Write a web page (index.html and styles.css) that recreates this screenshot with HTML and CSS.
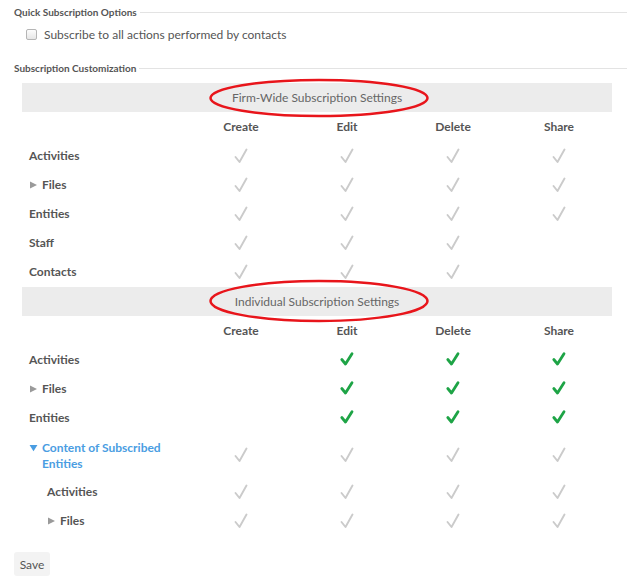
FILE: index.html
```html
<!DOCTYPE html>
<html>
<head>
<meta charset="utf-8">
<link rel="stylesheet" href="styles.css">
</head>
<body>
<div class="page">
  <div class="legend">Quick Subscription Options</div>
  <label class="check-row"><span class="box"></span>Subscribe to all actions performed by contacts</label>
  <div class="legend legend-2">Subscription Customization</div>

  <div class="grid">
    <div class="band">Firm-Wide Subscription Settings
      <svg class="ring ring-1" width="230" height="44" viewBox="0 0 230 44"><ellipse cx="115" cy="21" rx="108.5" ry="18" /></svg>
    </div>
    <div class="label"></div><div class="head">Create</div><div class="head">Edit</div><div class="head">Delete</div><div class="head">Share</div>

    <div class="label">Activities</div>
    <div class="cell"><svg class="ck" viewBox="0 0 14 16"><path d="M1.5 9 L5.5 14 L12.5 1.5"/></svg></div>
    <div class="cell"><svg class="ck" viewBox="0 0 14 16"><path d="M1.5 9 L5.5 14 L12.5 1.5"/></svg></div>
    <div class="cell"><svg class="ck" viewBox="0 0 14 16"><path d="M1.5 9 L5.5 14 L12.5 1.5"/></svg></div>
    <div class="cell"><svg class="ck" viewBox="0 0 14 16"><path d="M1.5 9 L5.5 14 L12.5 1.5"/></svg></div>

    <div class="label"><svg class="tri" viewBox="0 0 8 8"><path d="M0 0 L8 4 L0 8 Z"/></svg>Files</div>
    <div class="cell"><svg class="ck" viewBox="0 0 14 16"><path d="M1.5 9 L5.5 14 L12.5 1.5"/></svg></div>
    <div class="cell"><svg class="ck" viewBox="0 0 14 16"><path d="M1.5 9 L5.5 14 L12.5 1.5"/></svg></div>
    <div class="cell"><svg class="ck" viewBox="0 0 14 16"><path d="M1.5 9 L5.5 14 L12.5 1.5"/></svg></div>
    <div class="cell"><svg class="ck" viewBox="0 0 14 16"><path d="M1.5 9 L5.5 14 L12.5 1.5"/></svg></div>

    <div class="label">Entities</div>
    <div class="cell"><svg class="ck" viewBox="0 0 14 16"><path d="M1.5 9 L5.5 14 L12.5 1.5"/></svg></div>
    <div class="cell"><svg class="ck" viewBox="0 0 14 16"><path d="M1.5 9 L5.5 14 L12.5 1.5"/></svg></div>
    <div class="cell"><svg class="ck" viewBox="0 0 14 16"><path d="M1.5 9 L5.5 14 L12.5 1.5"/></svg></div>
    <div class="cell"><svg class="ck" viewBox="0 0 14 16"><path d="M1.5 9 L5.5 14 L12.5 1.5"/></svg></div>

    <div class="label">Staff</div>
    <div class="cell"><svg class="ck" viewBox="0 0 14 16"><path d="M1.5 9 L5.5 14 L12.5 1.5"/></svg></div>
    <div class="cell"><svg class="ck" viewBox="0 0 14 16"><path d="M1.5 9 L5.5 14 L12.5 1.5"/></svg></div>
    <div class="cell"><svg class="ck" viewBox="0 0 14 16"><path d="M1.5 9 L5.5 14 L12.5 1.5"/></svg></div>
    <div class="cell"></div>

    <div class="label">Contacts</div>
    <div class="cell"><svg class="ck" viewBox="0 0 14 16"><path d="M1.5 9 L5.5 14 L12.5 1.5"/></svg></div>
    <div class="cell"><svg class="ck" viewBox="0 0 14 16"><path d="M1.5 9 L5.5 14 L12.5 1.5"/></svg></div>
    <div class="cell"><svg class="ck" viewBox="0 0 14 16"><path d="M1.5 9 L5.5 14 L12.5 1.5"/></svg></div>
    <div class="cell"></div>

    <div class="band band-2">Individual Subscription Settings
      <svg class="ring ring-2" width="230" height="46" viewBox="0 0 230 46"><ellipse cx="115" cy="23" rx="108.5" ry="20" /></svg>
    </div>
    <div class="label"></div><div class="head">Create</div><div class="head">Edit</div><div class="head">Delete</div><div class="head">Share</div>

    <div class="label">Activities</div>
    <div class="cell"></div>
    <div class="cell"><svg class="ck on" viewBox="0 0 14 16"><path d="M1.8 7.5 L5.5 12 L12 1.8"/></svg></div>
    <div class="cell"><svg class="ck on" viewBox="0 0 14 16"><path d="M1.8 7.5 L5.5 12 L12 1.8"/></svg></div>
    <div class="cell"><svg class="ck on" viewBox="0 0 14 16"><path d="M1.8 7.5 L5.5 12 L12 1.8"/></svg></div>

    <div class="label"><svg class="tri" viewBox="0 0 8 8"><path d="M0 0 L8 4 L0 8 Z"/></svg>Files</div>
    <div class="cell"></div>
    <div class="cell"><svg class="ck on" viewBox="0 0 14 16"><path d="M1.8 7.5 L5.5 12 L12 1.8"/></svg></div>
    <div class="cell"><svg class="ck on" viewBox="0 0 14 16"><path d="M1.8 7.5 L5.5 12 L12 1.8"/></svg></div>
    <div class="cell"><svg class="ck on" viewBox="0 0 14 16"><path d="M1.8 7.5 L5.5 12 L12 1.8"/></svg></div>

    <div class="label">Entities</div>
    <div class="cell"></div>
    <div class="cell"><svg class="ck on" viewBox="0 0 14 16"><path d="M1.8 7.5 L5.5 12 L12 1.8"/></svg></div>
    <div class="cell"><svg class="ck on" viewBox="0 0 14 16"><path d="M1.8 7.5 L5.5 12 L12 1.8"/></svg></div>
    <div class="cell"><svg class="ck on" viewBox="0 0 14 16"><path d="M1.8 7.5 L5.5 12 L12 1.8"/></svg></div>

    <div class="label link tall"><svg class="tri down" viewBox="0 0 9 8"><path d="M0 0 L9 0 L4.5 7 Z"/></svg><span>Content of Subscribed<br>Entities</span></div>
    <div class="cell tall"><svg class="ck" viewBox="0 0 14 16"><path d="M1.5 9 L5.5 14 L12.5 1.5"/></svg></div>
    <div class="cell tall"><svg class="ck" viewBox="0 0 14 16"><path d="M1.5 9 L5.5 14 L12.5 1.5"/></svg></div>
    <div class="cell tall"><svg class="ck" viewBox="0 0 14 16"><path d="M1.5 9 L5.5 14 L12.5 1.5"/></svg></div>
    <div class="cell tall"><svg class="ck" viewBox="0 0 14 16"><path d="M1.5 9 L5.5 14 L12.5 1.5"/></svg></div>

    <div class="label sub">Activities</div>
    <div class="cell"><svg class="ck" viewBox="0 0 14 16"><path d="M1.5 9 L5.5 14 L12.5 1.5"/></svg></div>
    <div class="cell"><svg class="ck" viewBox="0 0 14 16"><path d="M1.5 9 L5.5 14 L12.5 1.5"/></svg></div>
    <div class="cell"><svg class="ck" viewBox="0 0 14 16"><path d="M1.5 9 L5.5 14 L12.5 1.5"/></svg></div>
    <div class="cell"><svg class="ck" viewBox="0 0 14 16"><path d="M1.5 9 L5.5 14 L12.5 1.5"/></svg></div>

    <div class="label sub"><svg class="tri" viewBox="0 0 8 8"><path d="M0 0 L8 4 L0 8 Z"/></svg>Files</div>
    <div class="cell"><svg class="ck" viewBox="0 0 14 16"><path d="M1.5 9 L5.5 14 L12.5 1.5"/></svg></div>
    <div class="cell"><svg class="ck" viewBox="0 0 14 16"><path d="M1.5 9 L5.5 14 L12.5 1.5"/></svg></div>
    <div class="cell"><svg class="ck" viewBox="0 0 14 16"><path d="M1.5 9 L5.5 14 L12.5 1.5"/></svg></div>
    <div class="cell"><svg class="ck" viewBox="0 0 14 16"><path d="M1.5 9 L5.5 14 L12.5 1.5"/></svg></div>
  </div>

  <button class="save">Save</button>
</div>
</body>
</html>
```

FILE: styles.css
```css
* { box-sizing: border-box; }
html, body { margin: 0; padding: 0; background: #fff; }
body { font-family: Lato, "Open Sans", "Liberation Sans", sans-serif; color: #555; }

.page { padding: 5px 3px 0 14px; width: 630px; }

.legend {
  display: flex;
  align-items: center;
  gap: 3px;
  height: 14px;
  font-size: 10px;
  font-weight: 700;
  color: #555;
}
.legend::after {
  content: "";
  flex: 1;
  border-top: 1px solid #e3e3e3;
}
.legend-2 { margin-top: 18px; }

.check-row {
  display: flex;
  align-items: center;
  gap: 7px;
  height: 18px;
  margin: 6px 0 0 12px;
  font-size: 12px;
  color: #555;
}
.box {
  width: 11px;
  height: 11px;
  border: 1px solid #b5b5b5;
  border-radius: 2px;
  background: linear-gradient(#fdfdfd, #e6e6e6);
}

.grid {
  display: grid;
  grid-template-columns: 166px repeat(4, 106px);
  margin: 8px 0 0 8px;
  width: 590px;
}

.band {
  grid-column: 1 / -1;
  position: relative;
  height: 29px;
  background: #ececec;
  display: flex;
  align-items: center;
  justify-content: center;
  font-size: 12px;
  color: #666;
}
.band-2 { margin-top: 1px; }

.ring {
  position: absolute;
  left: 182px;
  overflow: visible;
  pointer-events: none;
}
.ring-1 { top: -6px; }
.ring-2 { top: -9px; }
.ring ellipse { fill: none; stroke: #e8151b; stroke-width: 2.5; }

.head, .label, .cell {
  height: 29px;
  display: flex;
  align-items: center;
  font-size: 12px;
}
.head { justify-content: center; font-weight: 700; color: #555; }
.label { padding-left: 7px; font-weight: 700; color: #555; }
.label.sub { padding-left: 25px; }
.cell { justify-content: center; }
.tall { height: 45px; }

.label.link { color: #4a9de2; line-height: 16px; align-items: flex-start; padding-top: 8px; }

.tri { width: 7px; height: 8px; margin: 0 5px 0 1px; flex: none; }
.tri path { fill: #9a9a9a; }
.tri.down { width: 9px; height: 7px; margin: 5px 4px 0 0; }
.tri.down path { fill: #4a9de2; }

.ck { width: 14px; height: 16px; overflow: visible; }
.ck path { fill: none; stroke: #cbcbcb; stroke-width: 1.9; stroke-linecap: round; stroke-linejoin: round; }
.ck.on path { stroke: #1ea446; stroke-width: 2.8; }

.save {
  margin-top: 17px;
  width: 36px;
  height: 24px;
  padding: 0;
  border: none;
  border-radius: 3px;
  background: #f3f3f3;
  font-family: inherit;
  font-size: 12px;
  color: #555;
}
```
